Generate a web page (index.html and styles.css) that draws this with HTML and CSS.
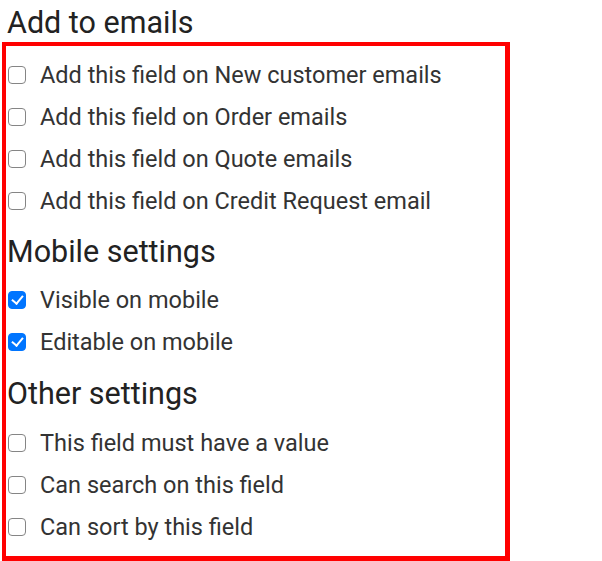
FILE: index.html
```html
<!DOCTYPE html>
<html>
<head>
<meta charset="utf-8">
<link rel="stylesheet" href="styles.css">
</head>
<body>
<h2 class="title">Add to emails</h2>
<div class="box">
  <label class="row"><input type="checkbox"><span>Add this field on New customer emails</span></label>
  <label class="row"><input type="checkbox"><span>Add this field on Order emails</span></label>
  <label class="row"><input type="checkbox"><span>Add this field on Quote emails</span></label>
  <label class="row"><input type="checkbox"><span>Add this field on Credit Request email</span></label>
  <h2 class="heading">Mobile settings</h2>
  <label class="row"><input type="checkbox" checked><span>Visible on mobile</span></label>
  <label class="row"><input type="checkbox" checked><span>Editable on mobile</span></label>
  <h2 class="heading heading-b">Other settings</h2>
  <label class="row"><input type="checkbox"><span>This field must have a value</span></label>
  <label class="row"><input type="checkbox"><span>Can search on this field</span></label>
  <label class="row"><input type="checkbox"><span>Can sort by this field</span></label>
</div>
</body>
</html>
```
FILE: styles.css
```css
html, body { margin: 0; padding: 0; background: #fff; }
body {
  font-family: Roboto, "Liberation Sans", sans-serif;
  color: #333;
}
.title {
  margin: 0;
  padding: 5px 0 0 7px;
  height: 42px;
  box-sizing: border-box;
  font-size: 30.5px;
  font-weight: 400;
  line-height: 36px;
  color: #222;
}
.box {
  margin-left: 2px;
  width: 499px;
  height: 502px;
  border: 4px solid #ff0000;
  border-right-width: 5px;
  border-bottom-width: 5px;
  padding: 8px 0 0 0;
  box-sizing: content-box;
}
.row {
  display: flex;
  align-items: center;
  height: 42px;
  padding-left: 2px;
  font-size: 23.5px;
  color: #333;
}
.row input {
  appearance: none;
  -webkit-appearance: none;
  margin: 0 14px 0 0;
  width: 18px;
  height: 18px;
  border: 1.5px solid #858585;
  border-radius: 4px;
  box-sizing: border-box;
  background: #fff;
  position: relative;
}
.row input:checked {
  background: #0075ff;
  border-color: #0075ff;
}
.row input:checked::after {
  content: "";
  position: absolute;
  left: 4.5px;
  top: 1px;
  width: 5px;
  height: 9px;
  border: solid #fff;
  border-width: 0 2.5px 2.5px 0;
  transform: rotate(40deg);
}
.heading {
  margin: 0;
  padding: 2px 0 0 1px;
  height: 57px;
  box-sizing: border-box;
  display: flex;
  align-items: center;
  font-size: 30.5px;
  font-weight: 400;
  color: #222;
}
.heading-b { height: 59px; }
```
